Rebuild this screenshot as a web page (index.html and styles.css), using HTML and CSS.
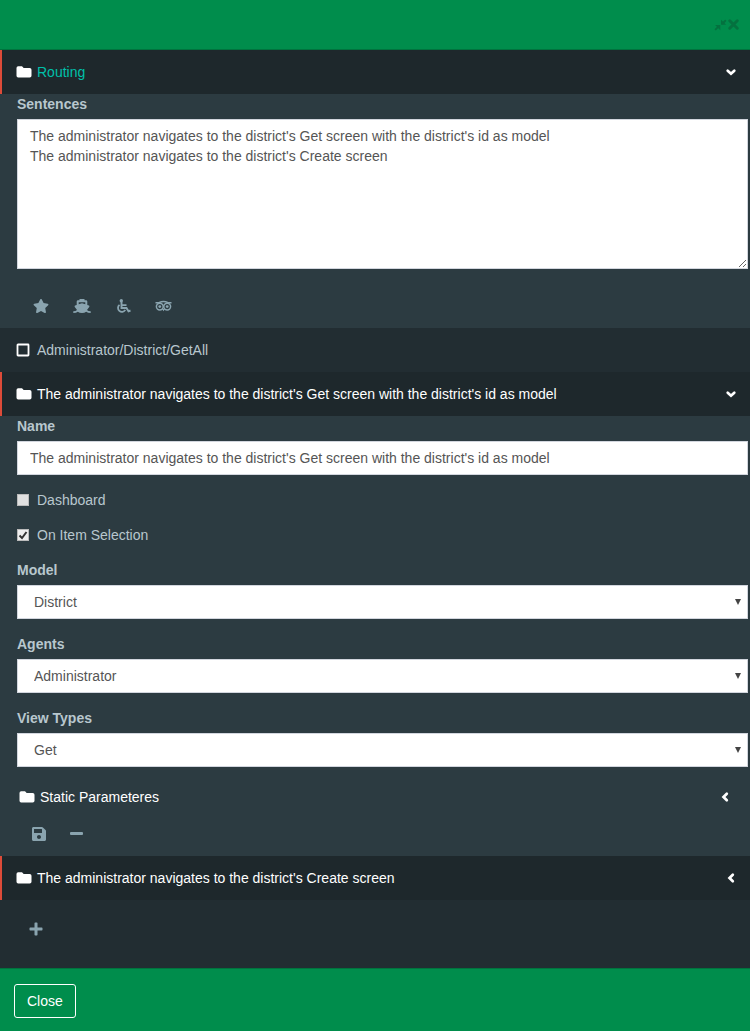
FILE: index.html
```html
<!DOCTYPE html>
<html lang="en">
<head>
<meta charset="utf-8">
<title>Routing</title>
<link rel="stylesheet" href="styles.css">
</head>
<body>
<svg class="sprite" aria-hidden="true">
  <symbol id="folder" viewBox="0 0 16 14"><path d="M2.200 1.300H6l1.700 1.700h6q1.800 0 1.800 1.800v6q0 1.700-1.800 1.700H2.200Q.5 12.500.5 10.800V3q0-1.700 1.700-1.700z"/></symbol>
  <symbol id="down" viewBox="0 0 14 14"><path d="M3.700 5.700 7 8.700l3.300-3" fill="none" stroke="currentColor" stroke-width="2.700" stroke-linecap="round"/></symbol>
  <symbol id="left" viewBox="0 0 14 14"><path d="M8.800 3.700 5.500 7l3.300 3.300" fill="none" stroke="currentColor" stroke-width="2.700" stroke-linecap="round"/></symbol>
</svg>
<div class="modal">
  <header class="modal-header">
    <button class="tool" aria-label="Compress"><svg viewBox="0 0 12 14"><path d="M1.500 11.500L4 9M10.500 3.500L8 6" stroke="currentColor" stroke-width="1.800" stroke-linecap="round"/><path d="M1 7.500h4.800v4.800zM6.500 2.500v4.800h4.800z"/></svg></button>
    <button class="tool" aria-label="Dismiss"><svg viewBox="0 0 12 14"><path d="M2.500 3.500l7 7M9.500 3.500l-7 7" stroke="currentColor" stroke-width="2.800" stroke-linecap="round"/></svg></button>
  </header>
  <main class="tree">
    <a class="row active teal" href="#"><svg class="folder"><use href="#folder"/></svg><span>Routing</span><svg class="caret"><use href="#down"/></svg></a>
    <section class="panel">
      <div class="field">
        <label for="sentences">Sentences</label>
        <textarea id="sentences" class="control">The administrator navigates to the district's Get screen with the district's id as model
The administrator navigates to the district's Create screen</textarea>
      </div>
      <div class="actions main-actions">
        <button aria-label="Favourite"><svg class="icon" viewBox="-32 -32 640 576"><path d="M259.300 17.800L194 150.200 47.900 171.500c-26.200 3.800-36.700 36.100-17.700 54.600l105.700 103-25 145.500c-4.500 26.300 23.200 46 46.400 33.700L288 439.600l130.700 68.700c23.200 12.200 50.900-7.400 46.400-33.700l-25-145.500 105.700-103c19-18.500 8.500-50.800-17.700-54.600L382 150.200 316.700 17.800c-11.700-23.600-45.600-23.900-57.400 0z"/></svg></button>
        <button aria-label="Ship"><svg class="icon" viewBox="0 0 18 16"><path fill-rule="evenodd" d="M6.500 1h5v1.300H13q1.300 0 1.300 1.300V7l1.600.6q1 .5.300 1.300L14 12q1.200 1.300 3.700 1.300V15q-3 0-4.500-1.200Q11.500 15 9 15t-4.200-1.200Q3.300 15 .3 15v-1.700q2.500 0 3.700-1.300L1.800 8.900q-.7-.8.300-1.300L3.700 7V3.600q0-1.300 1.300-1.300h1.500zM5.700 4.300v2L9 5.200l3.300 1.100v-2z"/></svg></button>
        <button aria-label="Accessibility"><svg class="icon" viewBox="0 0 18 16"><circle cx="7.300" cy="2.700" r="1.700"/><path d="M7.500 4v6h5l2 3.300 2-.8M7.500 7.100h5" fill="none" stroke="currentColor" stroke-width="1.900"/><path d="M5.500 6.900a3.900 3.900 0 1 0 5.800 5" fill="none" stroke="currentColor" stroke-width="1.800"/></svg></button>
        <button aria-label="Reviews"><svg class="icon" viewBox="0 0 18 16"><g fill="none" stroke="currentColor" stroke-width="1.500"><circle cx="4.800" cy="8.600" r="3.400"/><circle cx="12.200" cy="8.600" r="3.400"/><path d="M.5 4.700H4q4.500-2.500 9 0h3.500"/></g><circle cx="4.800" cy="8.600" r="1.400"/><circle cx="12.200" cy="8.600" r="1.400"/><path d="M7 11h3l-1.500 2.200z"/></svg></button>
      </div>
    </section>
    <a class="row" href="#"><svg class="square" viewBox="0 0 14 14"><rect x="1.500" y="1.500" width="11" height="11" rx=".5" fill="none" stroke="currentColor" stroke-width="1.800"/></svg><span>Administrator/District/GetAll</span></a>
    <a class="row active" href="#"><svg class="folder"><use href="#folder"/></svg><span>The administrator navigates to the district's Get screen with the district's id as model</span><svg class="caret"><use href="#down"/></svg></a>
    <section class="panel">
      <div class="field"><label for="name">Name</label><input id="name" class="control" type="text" value="The administrator navigates to the district's Get screen with the district's id as model"></div>
      <label class="check"><input type="checkbox">Dashboard</label>
      <label class="check"><input type="checkbox" checked>On Item Selection</label>
      <div class="field"><label for="model">Model</label><div class="select"><select id="model" class="control"><option>District</option></select></div></div>
      <div class="field"><label for="agents">Agents</label><div class="select"><select id="agents" class="control"><option>Administrator</option></select></div></div>
      <div class="field"><label for="views">View Types</label><div class="select"><select id="views" class="control"><option>Get</option></select></div></div>
      <a class="sub-row" href="#"><svg class="folder"><use href="#folder"/></svg><span>Static Parameteres</span><svg class="caret"><use href="#left"/></svg></a>
      <div class="actions item-actions">
        <button aria-label="Save"><svg class="icon" viewBox="-16 0 480 512"><path d="M433.941 129.941l-83.882-83.882A48 48 0 0 0 316.118 32H48C21.490 32 0 53.490 0 80v352c0 26.510 21.490 48 48 48h352c26.510 0 48-21.490 48-48V163.882a48 48 0 0 0-14.059-33.941zM224 416c-35.346 0-64-28.654-64-64 0-35.346 28.654-64 64-64s64 28.654 64 64c0 35.346-28.654 64-64 64zm96-304.520V212c0 6.627-5.373 12-12 12H76c-6.627 0-12-5.373-12-12V108c0-6.627 5.373-12 12-12h228.520c3.183 0 6.235 1.264 8.485 3.515l3.480 3.480A11.996 11.996 0 0 1 320 111.480z"/></svg></button>
        <button aria-label="Remove"><svg class="icon" viewBox="0 0 16 16"><rect x="2" y="6" width="13" height="3" rx="1"/></svg></button>
      </div>
    </section>
    <a class="row active" href="#"><svg class="folder"><use href="#folder"/></svg><span>The administrator navigates to the district's Create screen</span><svg class="caret"><use href="#left"/></svg></a>
    <div class="actions add-actions"><button aria-label="Add"><svg class="icon" viewBox="0 0 16 16"><path d="M7.200 1.500h1.600q.7 0 .7.700v4.300h4.300q.7 0 .7.700v1.600q0 .7-.7.700H9.500v4.300q0 .7-.7.700H7.200q-.7 0-.7-.7V9.500H2.200q-.7 0-.7-.7V7.200q0-.7.700-.7h4.300V2.200q0-.7.700-.7z"/></svg></button></div>
  </main>
  <footer class="modal-footer"><button class="close">Close</button></footer>
</div>
</body>
</html>
```

FILE: styles.css
```css
* { box-sizing: border-box; }
body {
  margin: 0;
  background: #008d4c;
  color: #b8c7ce;
  font: 14px/20px "Liberation Sans", Arial, sans-serif;
}
button { font: inherit; color: inherit; background: none; border: 0; padding: 0; }
svg { display: block; flex: none; fill: currentColor; }
.sprite { position: absolute; width: 0; height: 0; }
.modal-header {
  display: flex;
  justify-content: flex-end;
  align-items: center;
  height: 50px;
  padding-right: 10px;
  border-bottom: 1px solid #00733e;
}
.tool { color: #04713f; }
.tool svg { width: 13px; height: 15px; }
.tree { background: #222d32; }
.row {
  display: flex;
  align-items: center;
  gap: 5px;
  padding: 12px 12px 12px 14px;
  border-left: 2px solid transparent;
  color: #b8c7ce;
  text-decoration: none;
}
.active { background: #1e282c; border-left-color: #dd4b39; color: #fff; }
.teal span { color: #00c0aa; }
.folder { width: 16px; height: 14px; color: #fff; }
.square { width: 14px; height: 14px; margin-right: 2px; color: #fff; }
.caret { width: 14px; height: 14px; margin-left: auto; }
.panel {
  background: #2c3b41;
  padding: 0 2px 0 17px;
}
.field { margin-bottom: 15px; }
.field label { display: block; font-weight: 700; margin-bottom: 5px; }
.control {
  display: block;
  width: 100%;
  height: 34px;
  padding: 6px 12px;
  border: 1px solid #d2d6de;
  border-radius: 0;
  background: #fff;
  color: #555;
  font: inherit;
}
textarea.control { height: 150px; resize: vertical; }
.select { position: relative; }
.select::after {
  content: "";
  position: absolute;
  right: 7px;
  top: 14px;
  border: 3px solid transparent;
  border-top: 6px solid #444;
  border-bottom: 0;
}
select.control { appearance: none; padding-left: 16px; }
.check { display: flex; align-items: center; gap: 8px; margin-bottom: 15px; }
.check input {
  appearance: none;
  width: 12px;
  height: 12px;
  margin: 0;
  border: 1px solid #bbb;
  background: #e0e0e0;
}
.check input:checked {
  background: #eee url("data:image/svg+xml,%3Csvg xmlns='http://www.w3.org/2000/svg' viewBox='0 0 10 10'%3E%3Cpath d='M1.500 5.500l2.500 2.500L8.500 2' fill='none' stroke='%23333' stroke-width='2'/%3E%3C/svg%3E");
}
.actions { display: flex; color: #8aa4af; }
.actions svg { height: 16px; width: 18px; }
.main-actions { gap: 23px; padding: 14px 0 14px 15px; }
.sub-row {
  display: flex;
  align-items: center;
  gap: 5px;
  padding: 5px 16px 5px 2px;
  color: #fff;
  text-decoration: none;
}
.item-actions { gap: 19px; padding: 14px 0 14px 13px; }
.add-actions { padding: 21px 27px 31px; }
.modal-footer {
  padding: 15px 14px 13px;
  border-top: 1px solid #00733e;
}
.close {
  padding: 6px 12px;
  border: 1px solid #fff;
  border-radius: 3px;
  color: #fff;
}
```
